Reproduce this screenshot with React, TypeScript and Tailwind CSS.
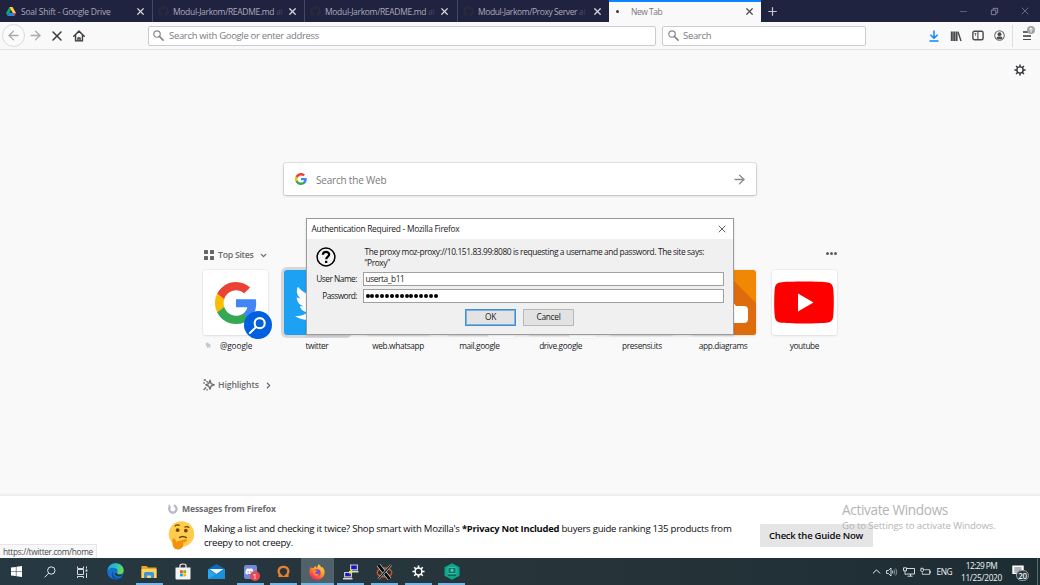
import type { ReactNode } from "react";
import { FaTwitter, FaDiscord, FaGithub } from "react-icons/fa";
import { ArrowLeft, ArrowRight, X, ChevronUp, ChevronDown, ChevronRight, Minus, Plus } from "lucide-react";

function GoogleG({ className }: { className: string }) {
  return (
    <svg viewBox="1 1 22 22" className={className}>
      <path fill="#4285F4" d="M22.56 12.25c0-.78-.07-1.53-.2-2.25H12v4.26h5.92c-.26 1.37-1.04 2.53-2.21 3.31v2.77h3.57c2.08-1.92 3.28-4.74 3.28-8.09z" />
      <path fill="#34A853" d="M12 23c2.97 0 5.46-.98 7.28-2.66l-3.57-2.77c-.98.66-2.23 1.06-3.71 1.06-2.86 0-5.29-1.93-6.16-4.53H2.18v2.84C3.99 20.53 7.7 23 12 23z" />
      <path fill="#FBBC05" d="M5.84 14.09c-.22-.66-.35-1.36-.35-2.09s.13-1.43.35-2.09V7.07H2.18C1.43 8.55 1 10.22 1 12s.43 3.45 1.18 4.93l2.85-2.22.81-.62z" />
      <path fill="#EA4335" d="M12 5.38c1.62 0 3.06.56 4.21 1.64l3.15-3.15C17.45 2.09 14.97 1 12 1 7.7 1 3.99 3.47 2.18 7.07l3.66 2.84c.87-2.6 3.3-4.53 6.16-4.53z" />
    </svg>
  );
}

function DriveIcon() {
  return (
    <svg viewBox="0 0 20 18" className="h-[9px] w-[10px] shrink-0">
      <path fill="#11a861" d="M7 0 0 12l3.4 6L10 6z" />
      <path fill="#ffcf48" d="M7 0h6l7 12h-6.6z" />
      <path fill="#2684fc" d="M3.4 18 6.8 12H20l-3.4 6z" />
      <path fill="#ea4335" d="M13.4 12H20l-3.4 6z" />
    </svg>
  );
}

function SearchIcon({ className }: { className: string }) {
  return (
    <svg viewBox="0 0 12 12" className={className} fill="none" stroke="#858589">
      <circle cx="4.4" cy="4.4" r="3.5" strokeWidth="1.3" />
      <path d="M7 7l4 4" strokeWidth="1.7" strokeLinecap="round" />
    </svg>
  );
}

function GearIcon({ className, hole }: { className: string; hole: string }) {
  return (
    <svg viewBox="0 0 24 24" className={className} fill="none" stroke="currentColor">
      <path d="M12 0.8V23.2M0.8 12H23.2M4.1 4.1 19.9 19.9M19.9 4.1 4.1 19.9" strokeWidth="3" />
      <circle cx="12" cy="12" r="6.3" fill={hole} strokeWidth="2.8" />
    </svg>
  );
}

function Tab({ title, tail, className, tracking }: { title: string; tail: string; className: string; tracking: string }) {
  return (
    <div className={`flex h-full items-center border-l border-[#45456a] ${className}`}>
      <FaGithub className="ml-[5px] size-[11px] shrink-0 text-[#282b3a]" />
      <span className={`ml-[4px] w-[110px] overflow-hidden whitespace-pre pt-[2px] text-[8.5px] text-[#a9a9ba] ${tracking}`}>
        {title}
        <span className="bg-linear-to-r from-[#77778c] to-[#303050] bg-clip-text text-transparent"> {tail}</span>
      </span>
      <X className="ml-[3.5px] size-[11px] shrink-0 text-[#d6d6e0]" strokeWidth={2.6} />
    </div>
  );
}

function Site({ label, children, tile = "bg-white", hot = false }: { label: ReactNode; children?: ReactNode; tile?: string; hot?: boolean }) {
  return (
    <div className="flex flex-col items-center">
      <div className={`relative flex h-[65px] w-[65px] items-center justify-center rounded-[3px] ${tile} ${hot ? "shadow-[0_0_0_3px_#d7d7db]" : "shadow-[0_0_0_1px_#00000009,0_1px_3px_#00000014]"}`}>
        {children}
      </div>
      <div className="mt-[5px] whitespace-nowrap text-[8.3px] leading-[11px] tracking-[-0.36px] text-[#19191d]">{label}</div>
    </div>
  );
}

function TaskItem({ children, open = false, active = false }: { children: ReactNode; open?: boolean; active?: boolean }) {
  return (
    <div className={`flex h-full w-[33.6px] shrink-0 flex-col items-center ${active ? "bg-[#51616a]" : ""}`}>
      <div className="flex h-[25px] items-center justify-center pt-[2px]">{children}</div>
      {open && <div className={`h-[2px] bg-[#72b7ea] ${active ? "w-full" : "w-[27px]"}`} />}
    </div>
  );
}

function TabStrip() {
  return (
    <div className="flex h-[22px] shrink-0 items-center bg-[#202340]">
      <div className="flex h-full w-[152px] items-center pl-[6px]">
        <DriveIcon />
        <span className="ml-[5px] w-[114px] whitespace-nowrap pt-[2px] text-[8.5px] tracking-[-0.21px] text-[#a9a9ba]">Soal Shift - Google Drive</span>
        <X className="size-[11px] shrink-0 text-[#d6d6e0]" strokeWidth={2.6} />
      </div>
      <Tab className="w-[152px]" title="Modul-Jarkom/README.md" tail="at" tracking="tracking-[-0.32px]" />
      <Tab className="w-[153px]" title="Modul-Jarkom/README.md" tail="at" tracking="tracking-[-0.32px]" />
      <Tab className="w-[152px]" title="Modul-Jarkom/Proxy Server" tail="at" tracking="tracking-[-0.4px]" />
      <div className="flex h-full w-[152px] items-center border-t-2 border-[#0a84ff] bg-[#f9f9fa]">
        <div className="mb-[2px] ml-[7px] size-[3px] rounded-full bg-[#3a3a3e]" />
        <span className="ml-[12px] w-[113px] text-[8.5px] tracking-[-0.48px] text-[#77777c]">New Tab</span>
        <X className="mb-[2px] size-[11px] text-[#4a4a4f]" strokeWidth={2.6} />
      </div>
      <Plus className="ml-[5px] size-[13px] text-[#c5c5d0]" strokeWidth={2.2} />
      <Minus className="ml-[179px] size-[11px] text-[#74748a]" strokeWidth={1.6} />
      <svg viewBox="0 0 10 10" className="ml-[21px] size-[9px]" fill="none" stroke="#8a8a9e" strokeWidth="1">
        <path d="M1.5 3.5h5v5h-5zM3.5 3.3V1.5h5v5H6.7" />
      </svg>
      <X className="ml-[20px] size-[12px] text-[#8a8a9e]" strokeWidth={1.4} />
    </div>
  );
}

function Toolbar() {
  return (
    <div className="flex h-[28px] shrink-0 items-center border-b border-[#e3e3e6] bg-[#f9f9fa]">
      <div className="ml-[2px] flex size-[23px] items-center justify-center rounded-full border border-[#d9d9dc] bg-[#fbfbfb]">
        <ArrowLeft className="size-[15px] text-[#a9a9ad]" strokeWidth={2.2} />
      </div>
      <ArrowRight className="ml-[3px] size-[15px] text-[#a9a9ad]" strokeWidth={2.2} />
      <X className="ml-[6px] size-[16px] text-[#3d3d42]" strokeWidth={2.3} />
      <svg viewBox="0 0 16 16" className="ml-[8px] size-[12px]" fill="none" stroke="#3d3d42" strokeWidth="1.9" strokeLinejoin="round">
        <path d="M1 8.2 8 1.5l7 6.7M3.4 7v7.5h9.2V7M6.6 14.5v-4h2.8v4" strokeLinecap="round" />
      </svg>
      <div className="ml-[63px] flex h-[20px] w-[508px] items-center rounded-[2px] border border-[#ccccd0] bg-white">
        <SearchIcon className="mb-px ml-[4px] size-[11px]" />
        <span className="ml-[5px] mt-[2px] whitespace-nowrap text-[9.5px] tracking-[-0.32px] text-[#7b7b80]">Search with Google or enter address</span>
      </div>
      <div className="ml-[6px] flex h-[20px] w-[204px] items-center rounded-[2px] border border-[#ccccd0] bg-white">
        <SearchIcon className="mb-px ml-[5px] size-[11px]" />
        <span className="ml-[4px] mt-[2px] text-[9.5px] tracking-[-0.32px] text-[#7b7b80]">Search</span>
      </div>
      <svg viewBox="0 0 10 12" className="ml-[63px] h-[12px] w-[10px]" fill="none" stroke="#0a84ff" strokeWidth="1.5">
        <path d="M5 0.5v7.5M1.4 4.8 5 8.2l3.6-3.4M0.5 11h9" />
      </svg>
      <svg viewBox="0 0 12 12" className="ml-[11px] size-[12px]" fill="none" stroke="#4a4a4f" strokeWidth="2">
        <path d="M1.8 1.5v9.500M4.200 1.5v9.500M6.600 1.5v9.500" />
        <path d="M8 1.7 11 11" strokeWidth="1.4" />
      </svg>
      <svg viewBox="0 0 12 11" className="ml-[10px] h-[11px] w-[12px]" fill="none" stroke="#4a4a4f" strokeWidth="1.4">
        <rect x="0.9" y="1.2" width="10.2" height="8.6" rx="1.5" />
        <path d="M5.9 1v9" strokeWidth="1.1" />
        <path d="M2.500 3.500H4.300M3.600 3.500v2.400" strokeWidth="0.800" />
      </svg>
      <svg viewBox="0 0 12 12" className="ml-[10px] size-[11px]" fill="none" stroke="#66666b" strokeWidth="1.1">
        <circle cx="6" cy="6" r="5.2" />
        <circle cx="6" cy="4.5" r="2.1" fill="#4a4a4f" stroke="none" />
        <path d="M2.7 8.6C3.3 6.9 4.4 7 6 7s2.7 0 3.3 1.6C8.2 9.8 7.2 10 6 10S3.8 9.8 2.7 8.6z" fill="#4a4a4f" stroke="none" />
      </svg>
      <div className="ml-[7px] h-[22px] w-px bg-[#dddddf]" />
      <div className="relative ml-[10px] flex w-[8px] flex-col gap-[2px]">
        <div className="h-[2px] w-[5px] bg-[#66666a]" />
        <div className="h-[2px] bg-[#66666a]" />
        <div className="h-px bg-[#4a4a4f]" />
        <svg viewBox="0 0 8 8" className="absolute -top-[5px] left-[4px] size-[8px]">
          <circle cx="4" cy="4" r="4" fill="#a2a2a6" />
          <path d="M4 6.5V2M2.2 3.6 4 1.8l1.8 1.8" stroke="#fff" fill="none" />
        </svg>
      </div>
    </div>
  );
}

function NewTabPage() {
  return (
    <div className="flex h-[445px] shrink-0 flex-col bg-[#f9f9fa]">
      <div className="flex h-[113px] justify-end pr-[14px] pt-[14px]">
        <GearIcon className="size-[12px] text-[#333338]" hole="#f9f9fa" />
      </div>
      <div className="ml-[284px] flex h-[32px] w-[472px] shrink-0 items-center rounded-[2px] bg-white shadow-[0_0_0_1px_#00000016,0_1px_3px_#0000002e]">
        <GoogleG className="ml-[11px] size-[12px]" />
        <span className="ml-[9px] mt-[2px] flex-1 text-[10px] tracking-[-0.2px] text-[#7b7b80]">Search the Web</span>
        <ArrowRight className="mr-[9px] size-[15px] text-[#88888c]" strokeWidth={2.200} />
      </div>
      <div className="ml-[204px] mt-[52px] flex h-[16px] w-[633px] items-center text-[#6c6c70]">
        <div className="grid grid-cols-2 gap-[2px]">
          <div className="size-[4px] rounded-[0.5px] bg-[#66666a]" />
          <div className="size-[4px] rounded-[0.5px] bg-[#66666a]" />
          <div className="size-[4px] rounded-[0.5px] bg-[#66666a]" />
          <div className="size-[4px] rounded-[0.5px] bg-[#66666a]" />
        </div>
        <span className="ml-[4px] mt-[2px] whitespace-nowrap text-[8.8px] font-semibold tracking-[-0.3px]">Top Sites</span>
        <ChevronDown className="ml-[5px] size-[9px]" strokeWidth={3.4} />
        <div className="mb-[3px] ml-auto mr-0 flex gap-px">
          <div className="size-[3px] rounded-full bg-[#5c5c60]" />
          <div className="size-[3px] rounded-full bg-[#5c5c60]" />
          <div className="size-[3px] rounded-full bg-[#5c5c60]" />
        </div>
      </div>
      <div className="ml-[195px] mt-[7px] grid w-[650px] grid-cols-8">
        <Site
          label={
            <span className="flex items-center tracking-[-0.100px]">
              <svg viewBox="0 0 8 8" className="-ml-[14px] mr-[8px] size-[7px]" fill="#c7c7cc">
                <path d="M1 1l2-.5L7 4 5.5 5l1.5 2.4L4.4 5.8 3 7 0.8 3z" />
              </svg>
              @google
            </span>
          }
        >
          <GoogleG className="size-[42px]" />
          <div className="absolute left-[40.5px] top-[41px] flex size-[28px] items-center justify-center rounded-full bg-[#0060df]">
            <svg viewBox="0 0 20 20" className="size-[19px]" fill="none" stroke="#fff" strokeWidth="2.2" strokeLinecap="round">
              <circle cx="12.3" cy="7.5" r="5.3" />
              <path d="M8.3 11.7 2 18" />
            </svg>
          </div>
        </Site>
        <Site label="twitter" tile="bg-[#1da1f2]" hot>
          <FaTwitter className="size-[43px] text-white" />
        </Site>
        <Site label="web.whatsapp" tile="bg-[#4a5860]" />
        <Site label="mail.google">
          <div className="absolute left-[41px] top-[40px] size-[28px] rounded-[2px] bg-white shadow-[0_0_0_1px_#00000009]" />
        </Site>
        <Site label="drive.google">
          <div className="absolute left-[41px] top-[40px] size-[28px] rounded-[2px] bg-white shadow-[0_0_0_1px_#00000009]" />
        </Site>
        <Site label="presensi.its" />
        <Site label="app.diagrams" tile="bg-[#f08705]">
          <svg viewBox="0 0 65 65" className="size-[65px]">
            <path d="M43 11 65 33V62a3 3 0 0 1-3 3H12L0 52z" fill="#df6c0c" />
            <path d="M26 12h16v15h-4l7 9h8a4 4 0 0 1 4 4v9a4 4 0 0 1-4 4H39V36h-3L30 27h-4z" fill="#fff" />
          </svg>
        </Site>
        <Site label="youtube">
          <svg viewBox="0 0 60 42" className="h-[43px] w-[60px]">
            <path d="M30 0c11 0 20 .3 24 1 3.5.6 4.700 2.500 5.200 6C60 14 60 28 59.200 35c-.5 3.500-1.700 5.400-5.200 6-8 1.300-40 1.300-48 0-3.500-.6-4.700-2.500-5.200-6C0 28 0 14 .8 7 1.300 3.500 2.500 1.600 6 1c4-.7 13-1 24-1z" fill="#f00" />
            <path d="M24 12v18l15.500-9z" fill="#fff" />
          </svg>
        </Site>
      </div>
      <div className="ml-[203px] mt-[26px] flex h-[16px] items-center text-[#6c6c70]">
        <svg viewBox="0 0 12 12" className="size-[12px]" fill="none" stroke="currentColor" strokeWidth="1.3" strokeLinejoin="round">
          <path d="M7 1.200 8 4.600 11.200 5.800 8 7.100 7 10.200 5.700 7.100 2.700 5.800 5.700 4.600z" />
          <path d="M1.200 1h1.300M3.800 2.500l.6.5M0.800 4h.6M1 10.500l1.800-1.800M3.800 10.800h.7" strokeLinecap="round" />
        </svg>
        <span className="ml-[3px] mt-[2px] text-[8.700px] font-semibold tracking-[-0.130px]">Highlights</span>
        <ChevronRight className="ml-[5px] size-[9px]" strokeWidth={3.4} />
      </div>
    </div>
  );
}

function MessageBar() {
  return (
    <div className="flex h-[63px] shrink-0 border-t border-[#ededf0] bg-white pl-[168px] shadow-[0_-1px_2px_#0000000d]">
      <div className="flex w-[591.500px] flex-col">
        <div className="mt-[8px] flex h-[10px] items-center">
          <svg viewBox="0 0 12 12" className="size-[10px]" fill="none" stroke="#b9b9c6" strokeWidth="2.8">
            <path d="M2.800 2.800A4.400 4.400 0 1 0 7 1.700" />
            <path d="M1.500 0.500v4" strokeWidth="1.6" />
          </svg>
          <span className="ml-[4px] mt-px text-[8.6px] font-bold tracking-[-0.130px] text-[#6c6c70]">Messages from Firefox</span>
        </div>
        <div className="mt-[5px] flex">
          <svg viewBox="0 0 28 30" className="mt-[2px] h-[29px] w-[27px] shrink-0">
            <circle cx="14" cy="13.5" r="13.2" fill="#ffcc4d" />
            <circle cx="10" cy="9.5" r="1.9" fill="#664500" />
            <circle cx="18.500" cy="10" r="1.9" fill="#664500" />
            <path d="M7 5.500c1.500-1.800 4-1.800 5-.8M17 6.500c2-1 4-.6 5 .6" stroke="#664500" strokeWidth="1.2" fill="none" />
            <path d="M11.500 17.500c2.500-2 5.500-1.600 8 0" stroke="#664500" strokeWidth="1.500" fill="none" />
            <path d="M4.500 20c0-2 2.500-2.500 3.200-.5l.8 2 9-2.500c2.500-.6 3 1.900 1 2.600l-3 1c1.500 3.600-1.500 7-5 7-4.500 0-6-3-6-9.600z" fill="#f4900c" />
          </svg>
          <div className="ml-[9px] mt-[3px] whitespace-nowrap text-[9.6px] leading-[14px] tracking-[-0.250px] text-[#0c0c0d]">
            Making a list and checking it twice? Shop smart with Mozilla's <b className="text-[9.400px] tracking-[-0.230px]">*Privacy Not Included</b> buyers guide ranking 135 products from
            <br />
            creepy to not creepy.
          </div>
        </div>
      </div>
      <button className="mt-[28px] h-[23px] w-[113px] whitespace-nowrap rounded-[1px] bg-[#e5e5e6] pt-px text-[9.500px] font-semibold tracking-[-0.230px] text-[#0c0c0d]">Check the Guide Now</button>
    </div>
  );
}

function AuthDialog() {
  return (
    <div className="absolute left-[306px] top-[218px] flex h-[117px] w-[428px] flex-col border border-[#9b9b9b] bg-[#f0f0f0] text-[8.300px] text-[#1a1a1a] shadow-[0_1px_2px_#00000026]">
      <div className="flex h-[20px] items-center justify-between bg-white pl-[4.5px] pr-[5px]">
        <span className="text-[8.400px] tracking-[-0.260px]">Authentication Required - Mozilla Firefox</span>
        <X className="size-[12px] text-[#444]" strokeWidth={1.7} />
      </div>
      <div className="flex h-[32px] pl-[9px]">
        <svg viewBox="0 0 20 20" className="mt-[8px] size-[20px]" fill="none" stroke="#000">
          <circle cx="10" cy="10" r="8.9" strokeWidth="1.5" fill="#f4f4f4" />
          <path d="M6.900 7.800C7 5.800 8.300 4.900 10 4.900s3.200 1 3.200 2.700c0 2-3 2.200-3 4.700" strokeWidth="2.2" />
          <path d="M9 13.800h2.300V16H9z" fill="#000" stroke="none" />
        </svg>
        <p className="ml-[28.500px] mt-[7px] whitespace-nowrap text-[8.400px] leading-[11px] tracking-[-0.390px]">
          The proxy moz-proxy://10.151.83.99:8080 is requesting a username and password. The site says:
          <br />
          “Proxy”
        </p>
      </div>
      <div className="mt-px flex h-[14px] items-center">
        <span className="mr-[6px] mt-px w-[50px] whitespace-nowrap text-right tracking-[-0.480px]">User Name:</span>
        <div className="flex h-[14px] w-[361px] items-center border border-[#a0a0a0] bg-white pl-[1.5px] pt-px tracking-[-0.400px]">userta_b11</div>
      </div>
      <div className="mt-[3px] flex h-[14px] items-center">
        <span className="mr-[6px] mt-px w-[50px] text-right tracking-[-0.550px]">Password:</span>
        <div className="flex h-[14px] w-[361px] items-center gap-[0.880px] border border-[#a0a0a0] bg-white pl-[1.500px]">
          {Array.from({ length: 15 }, (_, i) => (
            <span key={i} className="size-[4px] rounded-full bg-black" />
          ))}
        </div>
      </div>
      <div className="ml-[158px] mt-[6px] flex gap-[7px]">
        <button className="h-[17px] w-[51px] border border-[#3c8fd8] bg-[#e3e3e3] tracking-[-0.200px] shadow-[inset_0_0_0_1px_#3c8fd899]">OK</button>
        <button className="h-[17px] w-[51px] border border-[#b8b8b8] bg-[#e2e2e2] tracking-[-0.250px]">Cancel</button>
      </div>
    </div>
  );
}

function PuttyIcon() {
  return (
    <svg viewBox="0 0 16 16" className="size-[16px]">
      <path d="M7 0.5h8v6H7zM1 8h8v5.5H1z" fill="#c9c9c9" />
      <path d="M8.2 1.5h5.600v3.700H8.200zM2.200 9h5.600v3.200H2.200z" fill="#1414d8" />
      <path d="M6 7h9.500v1.500H6zM0 14h9.500v1.500H0z" fill="#d8d8d8" />
      <path d="M9.500 5 5.500 8.300h2L5.500 11l5-3.500h-2z" fill="#ffee00" />
    </svg>
  );
}

function Taskbar() {
  return (
    <div className="flex h-[27px] shrink-0 items-center bg-linear-to-r from-[#263842] via-[#27343a] to-[#1d2d34]">
      <div className="grid w-[99px] shrink-0 grid-cols-3 justify-items-center">
        <svg viewBox="0 0 12 12" className="size-[11px]" fill="#fff">
          <path d="M0 1.700 5.300 1v4.700H0zM5.900.9 12 0v5.700H5.900zM0 6.300h5.300V11L0 10.300zM5.900 6.300H12V12l-6.100-.9z" />
        </svg>
        <svg viewBox="0 0 12 12" className="size-[12px]" fill="none" stroke="#e6eaec" strokeWidth="1">
          <circle cx="7.300" cy="4.500" r="3.700" />
          <path d="M4.700 7.200 0.700 11.300" />
        </svg>
        <svg viewBox="0 0 12 12" className="mr-[2px] size-[12px]" fill="none" stroke="#d6dcdf" strokeWidth="1">
          <path d="M1.500 0.500v2h6v-2M1.500 3.500h6v5h-6zM1.500 12v-1.500h6V12M10.500 0.500v2M10.500 7v5" />
          <path d="M10.500 3.500v2.200" strokeWidth="1.8" />
        </svg>
      </div>
      <TaskItem>
        <svg viewBox="0 0 17 17" className="size-[17px]">
          <defs>
            <linearGradient id="edge-top" x1="0" x2="1" y1="0" y2="0.3">
              <stop offset="0" stopColor="#1c9fe0" />
              <stop offset="0.6" stopColor="#2cc3c0" />
              <stop offset="1" stopColor="#65d94f" />
            </linearGradient>
          </defs>
          <circle cx="8.500" cy="8.500" r="8.200" fill="#1373cf" />
          <path d="M.4 8C1 3 4.500.3 8.500.3c5 0 8.200 3.500 8.200 7 0 2.700-2 4-4.200 4-1.800 0-2.700-.8-2.700-1.300 0-.6.8-.9.8-2.100C10.600 6 8.300 4.800 6 4.800 3 4.800 1 6.500.4 8z" fill="url(#edge-top)" />
          <path d="M6.200 8.200c-1 4 2 7.200 5.600 6.900 1.300-.1 2.600-.7 3.600-1.700-1.400 2.400-4 3.400-6.800 3.300C4.500 16 3.700 10 6.200 8.200z" fill="#0d4fa0" />
          <path d="M9.900 9.800c0 1.500 2.500 2.800 5.800 1.100l-.8 1.700c-3 1.900-6.600 1-7-2.300z" fill="#253740" />
        </svg>
      </TaskItem>
      <TaskItem open>
        <svg viewBox="0 0 16 14" className="h-[14px] w-[16px]">
          <path d="M.5 1h5l1.500 1.500h8.500V13H.5z" fill="#e9a820" />
          <path d="M.5 4h15v9H.5z" fill="#fcd462" />
          <path d="M3 13V8.500Q3 7 4.500 7h7Q13 7 13 8.500V13h-3v-2.500H6V13z" fill="#3f95d8" />
        </svg>
      </TaskItem>
      <TaskItem>
        <svg viewBox="0 0 16 17" className="h-[17px] w-[16px]">
          <path d="M5 5V2.500Q5 1 8 1t3 1.500V5" fill="none" stroke="#eee" strokeWidth="1.2" />
          <path d="M.5 4.500h15V15.500q0 1-1 1h-13q-1 0-1-1z" fill="#f3f3f3" />
          <path d="M5 7.300h2.800v2.800H5z" fill="#f25022" />
          <path d="M8.300 7.300h2.800v2.800H8.300z" fill="#7fba00" />
          <path d="M5 10.600h2.800v2.800H5z" fill="#00a4ef" />
          <path d="M8.300 10.600h2.800v2.800H8.300z" fill="#ffb900" />
        </svg>
      </TaskItem>
      <TaskItem>
        <svg viewBox="0 0 17 15" className="h-[15px] w-[17px]">
          <path d="M0 5 8.500 0 17 5v10H0z" fill="#0f6cbd" />
          <path d="M1.500 5h14L8.500 10z" fill="#e8f4fc" />
          <path d="M0 5l8.500 5.500L17 5v10H0z" fill="#28a8ea" />
          <path d="M0 15 17 5v10z" fill="#1a90dc" />
        </svg>
      </TaskItem>
      <TaskItem open>
        <div className="relative flex h-[14px] w-[13px] items-center justify-center rounded-[2px] bg-[#7289da]">
          <FaDiscord className="mb-px mr-px size-[9px] text-white" />
          <span className="absolute left-[6px] top-[6px] flex size-[10px] items-center justify-center rounded-full bg-[#e8484f] text-[8px] leading-none text-white">1</span>
        </div>
      </TaskItem>
      <TaskItem open>
        <svg viewBox="0 0 14 14" className="size-[13px]" fill="none" stroke="#e8802b" strokeWidth="2.5">
          <path d="M1.500 11.700H4.600C-.2 8 1.500 2 7 2S14.200 8 9.400 11.700h3.100" />
        </svg>
      </TaskItem>
      <TaskItem open active>
        <svg viewBox="0 0 17 17" className="size-[16px]">
          <defs>
            <linearGradient id="fox" x1="0.9" x2="0.2" y1="0" y2="1">
              <stop offset="0" stopColor="#ffe544" />
              <stop offset="0.45" stopColor="#ff9a1f" />
              <stop offset="0.8" stopColor="#ff4050" />
              <stop offset="1" stopColor="#e3267a" />
            </linearGradient>
          </defs>
          <path d="M2.200 3l.5 1.400L5 4c.5-1.200 1.300-1.700 2.200-2 0 1 .5 1.600 1.300 2L10 0.300c2 1 2.600 2.400 2.900 3.600l1-.9c2 2 2.800 4 2.700 6.300-.3 4.300-3.800 7.400-8.100 7.400S.4 13.200.4 8.800C.4 6.500 1 4.600 2.200 3z" fill="url(#fox)" />
          <circle cx="8.700" cy="9.200" r="3.600" fill="#8644d8" />
          <path d="M4 7c2-.8 3.500-.4 5 .2-.7 1.200-2.200 1-2.400 2.200 1 2 3 1.700 4.200.7-.3 2.500-2.500 3.300-4 2.700C4.700 12 3.700 9.500 4 7z" fill="#ff8a22" />
        </svg>
      </TaskItem>
      <TaskItem open>
        <PuttyIcon />
      </TaskItem>
      <TaskItem open>
        <svg viewBox="0 0 18 17" className="h-[16px] w-[17px]" fill="none">
          <ellipse cx="9" cy="9" rx="7.8" ry="4.8" stroke="#c8551f" strokeWidth="1.5" />
          <path d="M2.500 1 14.500 16" stroke="#d5d5d5" strokeWidth="4.4" />
          <path d="M2.500 1 14.500 16" stroke="#0a0a0a" strokeWidth="3" />
          <path d="M16 1 2.500 16" stroke="#c9c9c9" strokeWidth="2.400" />
          <path d="M16 1 2.500 16" stroke="#0a0a0a" strokeWidth="1.200" />
        </svg>
      </TaskItem>
      <TaskItem open>
        <GearIcon className="size-[13px] text-white" hole="#27343a" />
      </TaskItem>
      <TaskItem open>
        <svg viewBox="0 0 16 17" className="h-[17px] w-[16px]">
          <path d="M8 .3 15.500 4.300v8.400L8 16.700.5 12.700V4.300z" fill="#09a88a" />
          <rect x="4" y="4.500" width="8" height="6" rx="1" fill="#0a7a6e" stroke="#55bfa9" strokeWidth="0.8" />
          <circle cx="8" cy="7.300" r="1.500" fill="#55c9b0" />
          <path d="M4 12.300h8" stroke="#0b5f59" strokeWidth="1.3" />
        </svg>
      </TaskItem>
      <div className="ml-auto flex h-full items-center text-[8.300px] text-[#f0f3f4]">
        <ChevronUp className="size-[13px]" strokeWidth={1.8} />
        <svg viewBox="0 0 12 10" className="ml-[3px] h-[10px] w-[12px]" fill="none" stroke="#e6eaec" strokeWidth="0.9">
          <path d="M.6 3.500h1.800L5 1v8L2.400 6.500H.6zM6.500 3.700q.8 1.300 0 2.600" />
          <path d="M8 2.500q1.700 2.500 0 5M9.700 1.500q2.300 3.500 0 7" stroke="#8b979c" />
        </svg>
        <svg viewBox="0 0 12 10" className="ml-[5px] h-[10px] w-[12px]" fill="none" stroke="#e6eaec" strokeWidth="0.9">
          <path d="M3.500 1.500h8v5.500h-8M7.500 7v2M4.500 9.200h5M.5 0.800h3v3h-3zM2 3.800v3.500h1.500" />
        </svg>
        <svg viewBox="0 0 12 10" className="ml-[5px] h-[10px] w-[11px]" fill="none" stroke="#e6eaec" strokeWidth="0.9">
          <path d="M4.500 2.500h6v5h-8V5.500M10.500 4h1.200v2h-1.200M.8 1.500h3v2.300l-1.500 1L.8 3.800zM1.500 1.500V.3M3 1.500V.3" />
        </svg>
        <span className="ml-[6px] mt-px tracking-[-0.500px]">ENG</span>
        <div className="ml-[8px] flex w-[43px] flex-col items-center leading-[12px]">
          <span className="whitespace-nowrap tracking-[-0.550px]">12:29 PM</span>
          <span className="tracking-[-0.300px]">11/25/2020</span>
        </div>
        <div className="relative ml-[9px] h-[13px] w-[25px]">
          <svg viewBox="0 0 12 12" className="size-[12px]">
            <path d="M.3.500h11.400v8.500H7L4 11.500V9H.3z" fill="#fff" />
            <path d="M2.300 3h7.400M2.300 5h7.400M2.300 7h4" stroke="#33434b" strokeWidth="0.8" />
          </svg>
          <span className="absolute left-[4px] top-[5px] flex h-[11px] w-[13px] items-center justify-center rounded-full border border-[#8f999e] bg-[#2d3a40] text-[8px] font-semibold leading-none tracking-[-0.3px]">20</span>
        </div>
        <div className="h-full w-[3px] border-l border-[#5c6a70]" />
      </div>
    </div>
  );
}

export default function App() {
  return (
    <div className="relative flex h-[585px] w-[1040px] flex-col overflow-hidden font-['Open_Sans','Noto_Sans',sans-serif]">
      <TabStrip />
      <Toolbar />
      <NewTabPage />
      <MessageBar />
      <Taskbar />
      <AuthDialog />
      <div className="absolute left-0 top-[544px] flex h-[14px] w-[97px] items-center whitespace-nowrap border-r border-t border-[#e6e6e8] bg-[#f8f8f9] pl-[3px] pt-px text-[8.3px] tracking-[-0.34px] text-[#4a4a4f]">https://twitter.com/home</div>
      <div className="absolute left-[842px] top-[501px] whitespace-nowrap text-[#b4b4b4]">
        <div className="text-[13.6px] leading-[17px] tracking-[-0.35px]">Activate Windows</div>
        <div className="text-[9.6px] leading-[15px] tracking-[-0.1px]">Go to Settings to activate Windows.</div>
      </div>
    </div>
  );
}
